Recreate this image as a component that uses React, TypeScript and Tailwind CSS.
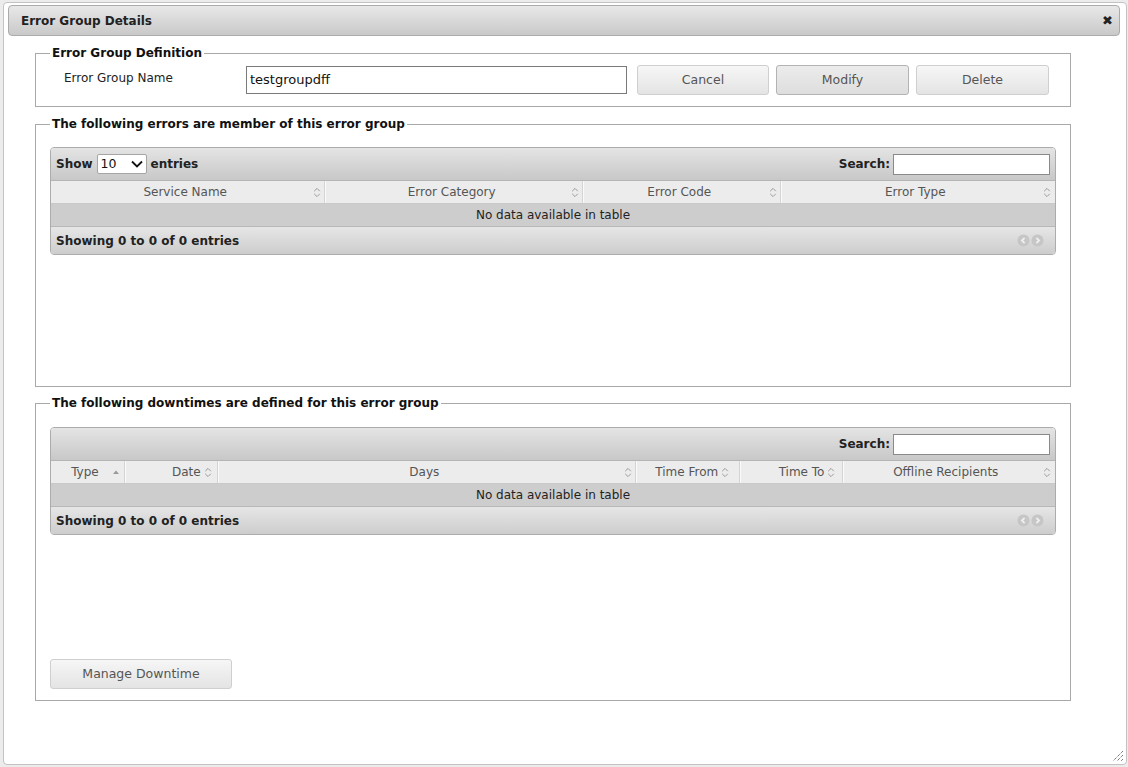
import React from "react";

const F = { fontFamily: '"DejaVu Sans", Verdana, sans-serif' };

function SortIcon({ dir }: { dir?: "asc" }) {
  if (dir === "asc") {
    return (
      <svg width="8" height="6" viewBox="0 0 8 6" className="block">
        <path d="M1 5 L4 1.5 L7 5 Z" fill="#9a9a9a" />
      </svg>
    );
  }
  return (
    <svg width="8" height="11" viewBox="0 0 8 11" className="block">
      <path d="M1.2 4.2 L4 1.4 L6.8 4.2" fill="none" stroke="#9a9a9a" strokeWidth="1" />
      <path d="M1.2 6.8 L4 9.6 L6.8 6.8" fill="none" stroke="#9a9a9a" strokeWidth="1" />
    </svg>
  );
}

function PageIcons() {
  return (
    <div className="flex items-center gap-[1px] mr-[11px]">
      <svg width="13" height="13" viewBox="0 0 13 13">
        <circle cx="6.5" cy="6.5" r="6" fill="#c6c6c6" />
        <path d="M7.6 3.8 L4.9 6.5 L7.6 9.2" fill="none" stroke="#efefef" strokeWidth="1.8" />
      </svg>
      <svg width="13" height="13" viewBox="0 0 13 13">
        <circle cx="6.5" cy="6.5" r="6" fill="#c6c6c6" />
        <path d="M5.4 3.8 L8.1 6.5 L5.4 9.2" fill="none" stroke="#efefef" strokeWidth="1.8" />
      </svg>
    </div>
  );
}

type Col = { label: string; w: string; pad: string; asc?: boolean };

function DataTable({ cols, showLength }: { cols: Col[]; showLength: boolean }) {
  return (
    <div className="w-[1006px] border border-[#acacac] rounded-[4px] overflow-hidden">
      <div className="h-[33px] flex items-center justify-between bg-gradient-to-b from-[#e4e4e4] to-[#c8c8c8] border-b border-[#b5b5b5] pl-[5px] pr-[5px]">
        {showLength ? (
          <div className="flex items-center gap-[4px] text-[12px] font-bold text-[#222]">
            <span>Show</span>
            <div className="w-[50px] h-[20px] bg-white border border-[#a5a5a5] rounded-[2px] flex items-center justify-between pl-[3px] pr-[3px] font-normal text-[12.5px] text-[#111]">
              <span>10</span>
              <svg width="12" height="8" viewBox="0 0 12 8">
                <path d="M1 1.5 L6 6.5 L11 1.5" fill="none" stroke="#111" strokeWidth="1.8" />
              </svg>
            </div>
            <span>entries</span>
          </div>
        ) : (
          <div />
        )}
        <div className="flex items-center gap-[3px] text-[12px] font-bold text-[#222]">
          <span>Search:</span>
          <div className="w-[157px] h-[21px] bg-white border border-[#8a8a8a]" />
        </div>
      </div>
      <div className="flex h-[23px] bg-[#ececec] border-b border-[#c9c9c9]">
        {cols.map((c, i) => (
          <div
            key={c.label}
            className={`${c.w} relative flex items-center justify-center ${c.pad} text-[12px] text-[#555] ${
              i > 0 ? "border-l border-l-[#fafafa] shadow-[-1px_0_0_#d4d4d4]" : ""
            }`}
          >
            <span>{c.label}</span>
            {c.asc ? (
              <span className="absolute right-[5px] top-[8px]">
                <SortIcon dir="asc" />
              </span>
            ) : null}
            {c.label !== "Type" && c.label !== "Date" && c.label !== "Time From" && c.label !== "Time To" ? (
              <span className="absolute right-[4px] top-[6px]">
                <SortIcon />
              </span>
            ) : null}
            {c.label === "Date" || c.label === "Time From" || c.label === "Time To" ? (
              <span className="ml-[3px] mt-[1px]">
                <SortIcon />
              </span>
            ) : null}
          </div>
        ))}
      </div>
      <div className="h-[23px] bg-[#cdcdcd] flex items-center justify-center text-[12px] text-[#222] border-b border-[#b8b8b8]">
        No data available in table
      </div>
      <div className="h-[27px] flex items-center justify-between bg-gradient-to-b from-[#e6e6e6] to-[#cdcdcd] pl-[5px]">
        <span className="text-[12px] font-bold text-[#222]">Showing 0 to 0 of 0 entries</span>
        <PageIcons />
      </div>
    </div>
  );
}

function Legend({ children }: { children: React.ReactNode }) {
  return <legend className="px-[2px] text-[12px] font-bold text-[#111]">{children}</legend>;
}

function Btn({ children, w, active }: { children: React.ReactNode; w: string; active?: boolean }) {
  return (
    <div
      className={`${w} h-[30px] rounded-[3px] border flex items-center justify-center text-[12.5px] text-[#555] ${
        active
          ? "border-[#b3b3b3] bg-gradient-to-b from-[#ececec] to-[#dedede]"
          : "border-[#cfcfcf] bg-gradient-to-b from-[#f6f6f6] to-[#e4e4e4]"
      }`}
    >
      {children}
    </div>
  );
}

export default function App() {
  const errCols: Col[] = [
    { label: "Service Name", w: "w-[275px]", pad: "pr-[6px]" },
    { label: "Error Category", w: "w-[258px]", pad: "pr-[6px]" },
    { label: "Error Code", w: "w-[198px]", pad: "pr-[6px]" },
    { label: "Error Type", w: "w-[275px]", pad: "pr-[6px]" },
  ];
  const dtCols: Col[] = [
    { label: "Type", w: "w-[74px]", pad: "pr-[6px]", asc: true },
    { label: "Date", w: "w-[93px]", pad: "pl-[40px]" },
    { label: "Days", w: "w-[419px]", pad: "pr-[6px]" },
    { label: "Time From", w: "w-[104px]", pad: "pl-[8px]" },
    { label: "Time To", w: "w-[104px]", pad: "pl-[30px]" },
    { label: "Offline Recipients", w: "w-[212px]", pad: "pr-[8px]" },
  ];

  return (
    <div className="w-[1128px] h-[767px] bg-[#ececec] pl-[3px] pt-[2px] pr-[1px] overflow-hidden" style={F}>
      <div className="relative h-[763px] bg-white border border-[#c3c3c3] rounded-[4px] pt-[2px] px-[3px] pl-[4px]">
        <div className="h-[31px] w-[1112px] rounded-[4px] border border-[#ababab] bg-gradient-to-b from-[#e8e8e8] to-[#c9c9c9] flex items-center justify-between pl-[12px] pr-[6px]">
          <span className="text-[12px] font-bold text-[#222]">Error Group Details</span>
          <span className="text-[13px] text-[#222] font-bold leading-none">✖</span>
        </div>

        <div className="ml-[27px] w-[1036px] flex flex-col mt-[8px]">
          <fieldset className="border border-[#a9a9a9] px-[14px] pb-[11px] pt-[3px]">
            <Legend>Error Group Definition</Legend>
            <div className="flex items-center">
              <div className="w-[196px] pl-[14px] text-[12px] text-[#222] -mt-[4px]">Error Group Name</div>
              <div className="w-[381px] h-[28px] border border-[#7a7a7a] flex items-center pl-[3px] text-[13px] text-[#111]">
                testgroupdff
              </div>
              <div className="ml-[10px] flex gap-[7px]">
                <Btn w="w-[132px]">Cancel</Btn>
                <Btn w="w-[133px]" active>
                  Modify
                </Btn>
                <Btn w="w-[133px]">Delete</Btn>
              </div>
            </div>
          </fieldset>

          <fieldset className="mt-[8px] border border-[#a9a9a9] px-[14px]">
            <Legend>The following errors are member of this error group</Legend>
            <div className="h-[253px] pt-[14px]">
              <DataTable cols={errCols} showLength />
            </div>
          </fieldset>

          <fieldset className="mt-[7px] border border-[#a9a9a9] px-[14px] pb-[11px]">
            <Legend>The following downtimes are defined for this error group</Legend>
            <div className="pt-[15px] flex flex-col">
              <DataTable cols={dtCols} showLength={false} />
              <div className="mt-[124px] w-[182px] h-[30px] rounded-[3px] border border-[#cfcfcf] bg-gradient-to-b from-[#f6f6f6] to-[#e4e4e4] flex items-center justify-center text-[12.5px] text-[#555]">
                Manage Downtime
              </div>
            </div>
          </fieldset>
        </div>

        <svg className="absolute right-[2px] bottom-[2px]" width="13" height="13" viewBox="0 0 13 13">
          <path d="M12 2 L2 12 M12 6 L6 12 M12 10 L10 12" stroke="#444" strokeWidth="1" strokeDasharray="1 1" />
        </svg>
      </div>
    </div>
  );
}
